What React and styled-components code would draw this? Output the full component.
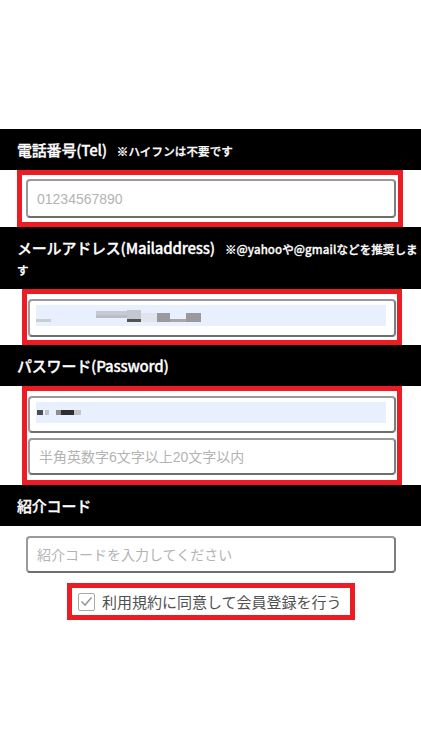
import React from 'react';
import styled, { createGlobalStyle } from 'styled-components';

const GlobalStyle = createGlobalStyle`
  html, body {
    margin: 0;
    padding: 0;
    background: #fff;
  }
  body {
    font-family: "Noto Sans CJK JP", "Noto Sans", sans-serif;
  }
`;

const fieldFont = `"Liberation Sans", "Noto Sans CJK JP", sans-serif`;

const App = () => (
  <>
    <GlobalStyle />
    <Page>
      <SectionHeader>
        電話番号(Tel)<Note>※ハイフンは不要です</Note>
      </SectionHeader>
      <Highlight left={17} right={18} pad='4px 2px 4px 4px'>
        <TextField placeholder='01234567890' h={39} />
      </Highlight>

      <SectionHeader>
        メールアドレス(Mailaddress)<Note>※@yahooや@gmailなどを推奨します</Note>
      </SectionHeader>
      <Highlight left={22} right={19} pad='5px 1px 3px 1px'>
        <FilledField h={38}>
          <Autofill>
            <svg width='350' height='21' viewBox='0 0 350 21'>
              <rect x='0' y='14' width='15' height='3' fill='#c9cdd5' />
              <rect x='60' y='6' width='31' height='7' fill='#c6cad3' />
              <rect x='60' y='10' width='31' height='3' fill='#b9bdc6' />
              <rect x='91' y='5' width='14' height='9' fill='#c3c7d0' />
              <rect x='91' y='14' width='14' height='3' fill='#545454' />
              <rect x='105' y='8' width='16' height='9' fill='#dfe4ee' />
              <rect x='121' y='8' width='13' height='9' fill='#9a9a9e' />
              <rect x='134' y='14' width='16' height='3' fill='#a7a7ab' />
              <rect x='150' y='8' width='15' height='9' fill='#9a9a9e' />
            </svg>
          </Autofill>
        </FilledField>
      </Highlight>

      <SectionHeader>
        パスワード(Password)
      </SectionHeader>
      <Highlight left={22} right={19} pad='5px 1px 5px 1px' gap={5}>
        <FilledField h={37}>
          <Autofill>
            <svg width='350' height='21' viewBox='0 0 350 21'>
              <rect x='1' y='8' width='6' height='5' fill='#4e4e52' />
              <rect x='9' y='8' width='4' height='5' fill='#c2c4ca' />
              <rect x='20' y='8' width='5' height='5' fill='#8d8e93' />
              <rect x='25' y='8' width='13' height='5' fill='#2e2e32' />
              <rect x='38' y='8' width='7' height='5' fill='#c2c4ca' />
            </svg>
          </Autofill>
        </FilledField>
        <TextField placeholder='半角英数字6文字以上20文字以内' h={37} />
      </Highlight>

      <SectionHeader>
        紹介コード
      </SectionHeader>
      <ReferralBody>
        <TextField placeholder='紹介コードを入力してください' h={37} />
        <AgreeHighlight>
          <CheckBox>
            <svg width='13' height='11' viewBox='0 0 13 11'>
              <polyline points='1.5,5.5 5,9 11.5,1.5' fill='none' stroke='#9a9a9a' strokeWidth='1.6' />
            </svg>
          </CheckBox>
          <AgreeLabel>利用規約に同意して会員登録を行う</AgreeLabel>
        </AgreeHighlight>
      </ReferralBody>
    </Page>
  </>
);

const Page = styled.div`
  width: 421px;
  min-height: 752px;
  padding-top: 129px;
  box-sizing: border-box;
  background: #fff;
`;

const SectionHeader = styled.div`
  background: #000;
  color: #fff;
  font-size: 15px;
  font-weight: 500;
  -webkit-text-stroke: 0.3px #fff;
  line-height: 21px;
  padding: 10px 0 10px 17px;
  letter-spacing: -0.2px;
`;

const Note = styled.span`
  font-size: 11.5px;
  font-weight: 500;
  margin-left: 10px;
  letter-spacing: 0.1px;
  line-height: 12px;
`;

const Highlight = styled.div`
  display: flex;
  flex-direction: column;
  gap: ${({ gap }) => gap || 0}px;
  margin: 0 ${({ right }) => right}px 0 ${({ left }) => left}px;
  padding: ${({ pad }) => pad};
  border: 5px solid #ed1c24;
`;

const fieldBase = `
  box-sizing: border-box;
  width: 100%;
  border: 2px solid #9a9a9a;
  border-bottom-color: #6e6e6e;
  border-right-color: #7e7e7e;
  border-radius: 4px;
  background: #fff;
`;

const TextField = styled.input`
  ${fieldBase}
  display: block;
  height: ${({ h }) => h}px;
  padding: 0 9px;
  font-family: ${fieldFont};
  font-size: 14px;
  color: #333;
  outline: none;

  &::placeholder {
    color: #b3b3b3;
  }
`;

const FilledField = styled.div`
  ${fieldBase}
  height: ${({ h }) => h}px;
  padding: 4px 8px 0 6px;
`;

const Autofill = styled.div`
  display: flex;
  width: 350px;
  height: 21px;
  background: #e8f0fe;
`;

const ReferralBody = styled.div`
  display: flex;
  flex-direction: column;
  padding: 10px 25px 0 26px;
  gap: 10px;
`;

const AgreeHighlight = styled.div`
  display: flex;
  align-items: center;
  align-self: center;
  width: 272px;
  height: 27px;
  padding: 0 0 0 6px;
  border: 5px solid #ed1c24;
  gap: 7px;
`;

const CheckBox = styled.span`
  display: flex;
  align-items: center;
  justify-content: center;
  box-sizing: border-box;
  width: 17px;
  height: 18px;
  border: 1.5px solid #a8a8a8;
  border-radius: 2px;
  background: #fff;
`;

const AgreeLabel = styled.span`
  font-size: 15px;
  color: #505050;
  letter-spacing: 0;
`;

export default App;
